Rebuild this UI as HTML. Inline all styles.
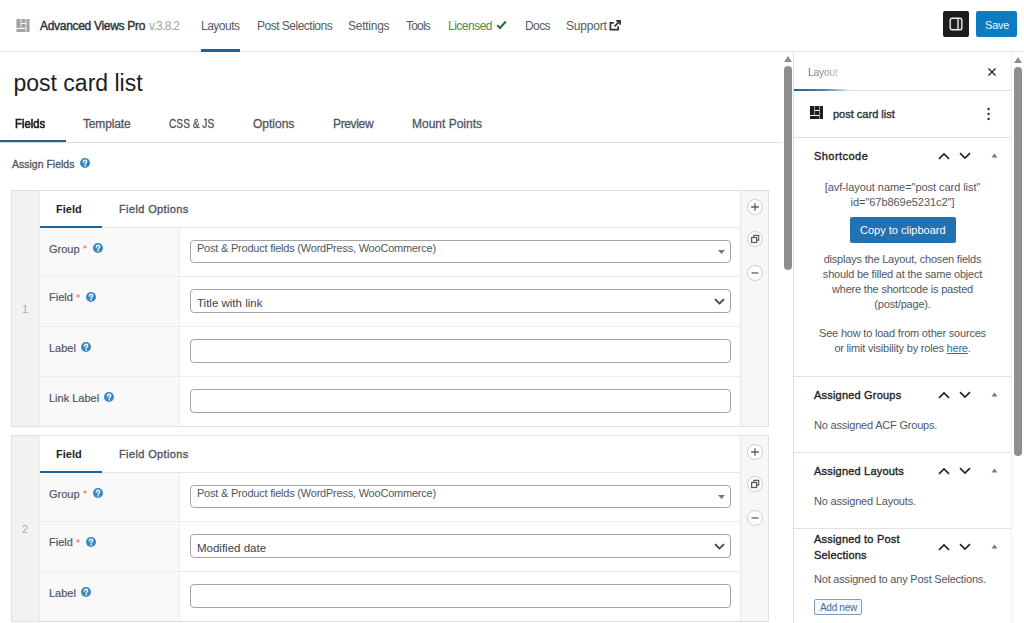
<!DOCTYPE html>
<html><head><meta charset="utf-8">
<style>
*{box-sizing:border-box;margin:0;padding:0}
html,body{width:1024px;height:623px;overflow:hidden;background:#fff;font-family:"Liberation Sans",sans-serif;color:#1e1e1e}
.a{position:absolute;white-space:nowrap}
.t12{font-size:12px;line-height:12px}
.t11{font-size:11px;line-height:11px}
.nav{font-size:12px;line-height:12px;letter-spacing:-0.5px;color:#555b61;top:20px}
.tab{font-size:12px;line-height:12px;letter-spacing:-0.15px;color:#50575e;-webkit-text-stroke:0.3px #50575e;top:118px}
.help{position:absolute;width:10px;height:10px}
.sep{position:absolute;height:1px;background:#e0e0e0}
.lbl{position:absolute;left:49px;font-size:11px;line-height:11px;color:#50575e;-webkit-text-stroke:0.2px #50575e}
.req{position:absolute;width:4px;height:4px}
.inp{position:absolute;left:190px;width:541px;height:24px;border:1px solid #a2a4a7;border-radius:4px;background:#fff}
.circ{position:absolute;left:747px;width:16px;height:16px}
.ph{position:absolute;left:814px;font-size:11px;line-height:11px;letter-spacing:0.2px;color:#1e1e1e;-webkit-text-stroke:0.35px #1e1e1e}
.pt{position:absolute;font-size:11px;line-height:15px;letter-spacing:-0.2px;color:#50575e}
.ctr{left:793px;width:219px;text-align:center}
</style></head><body>

<!-- ================= HEADER ================= -->
<div class="a" style="left:0;top:51px;width:1024px;height:1px;background:#e2e2e2"></div>
<svg class="a" style="left:16px;top:19px" width="14" height="13" viewBox="0 0 13.2 13"><g fill="#a5a5a5"><rect x="0" y="0" width="4" height="9"/><rect x="5" y="0" width="4" height="4"/><rect x="5" y="5" width="4" height="4"/><rect x="10" y="0" width="3.2" height="13"/><rect x="0" y="10" width="9" height="3"/><rect x="4" y="0" width="1" height="9" opacity="0.45"/><rect x="9" y="0" width="1" height="13" opacity="0.45"/></g></svg>
<div class="a t12" style="left:40px;top:20px;letter-spacing:-0.3px;color:#2c3338;-webkit-text-stroke:0.4px #2c3338">Advanced Views Pro</div>
<div class="a t12" style="left:149px;top:20px;letter-spacing:-0.7px;color:#a0a5aa">v.3.8.2</div>
<div class="a nav" style="left:201px">Layouts</div>
<div class="a" style="left:201px;top:49px;width:39px;height:3px;background:#1d6396"></div>
<div class="a nav" style="left:257px">Post Selections</div>
<div class="a nav" style="left:348px;letter-spacing:-0.25px">Settings</div>
<div class="a nav" style="left:406px;letter-spacing:-0.8px">Tools</div>
<div class="a nav" style="left:448px;color:#4a8753">Licensed</div>
<svg class="a" style="left:496px;top:20px" width="11" height="10" viewBox="0 0 11 10"><path d="M1.2 5.2L4 8L9.8 1.5" fill="none" stroke="#1d6e35" stroke-width="2"/></svg>
<div class="a nav" style="left:525px;letter-spacing:-0.6px">Docs</div>
<div class="a nav" style="left:566px;letter-spacing:-0.2px">Support</div>
<svg class="a" style="left:609px;top:19px" width="13" height="12" viewBox="0 0 13 12"><path d="M4.8 3.9H1.4V10.6H9.2V7.2" fill="none" stroke="#333" stroke-width="1.7"/><path d="M7.2 1.9H11.1V5.8M11.1 1.9L5.6 7.4" fill="none" stroke="#333" stroke-width="1.7"/></svg>
<div class="a" style="left:943px;top:11px;width:26px;height:26px;background:#1e1e1e;border-radius:2px"></div>
<svg class="a" style="left:949px;top:17px" width="14" height="14" viewBox="0 0 14 14"><rect x="1.2" y="1.2" width="11.6" height="11.6" rx="1.8" fill="none" stroke="#f0f0f0" stroke-width="1.4"/><rect x="8.3" y="1.2" width="1.4" height="11.6" fill="#f0f0f0"/></svg>
<div class="a" style="left:976px;top:11px;width:41px;height:26px;background:#0b7cc1;border-radius:2px"></div>
<div class="a t11" style="left:985px;top:20px;letter-spacing:-0.2px;color:#f2f8fc">Save</div>

<!-- ================= MAIN ================= -->
<svg class="a" style="left:784px;top:56px" width="8" height="6" viewBox="0 0 8 6"><path d="M0 6L4 0L8 6Z" fill="#8f8f8f"/></svg>
<div class="a" style="left:784px;top:66px;width:8px;height:204px;background:#8f8f8f;border-radius:4px"></div>

<div class="a" style="left:13.5px;top:72px;font-size:23px;line-height:23px;color:#1e1e1e">post card list</div>

<div class="a" style="left:0;top:142px;width:782px;height:1px;background:#dcdcde"></div>
<div class="a" style="left:0;top:140px;width:66px;height:2px;background:#1f6596"></div>
<div class="a tab" style="left:15px;color:#1e1e1e;-webkit-text-stroke:0.65px #1e1e1e;letter-spacing:0px;transform:scaleX(0.94);transform-origin:0 0">Fields</div>
<div class="a tab" style="left:83px">Template</div>
<div class="a tab" style="left:169px;letter-spacing:-0.1px;transform:scaleX(0.86);transform-origin:0 0">CSS &amp; JS</div>
<div class="a tab" style="left:253px;letter-spacing:0px">Options</div>
<div class="a tab" style="left:333px;letter-spacing:-0.35px">Preview</div>
<div class="a tab" style="left:412px;letter-spacing:0px">Mount Points</div>

<div class="a" style="left:12px;top:159px;font-size:10.5px;line-height:10.5px;letter-spacing:0px;color:#50575e;-webkit-text-stroke:0.3px #50575e">Assign Fields</div>
<svg class="help" style="left:80px;top:158px" viewBox="0 0 10 10"><g><circle cx="5" cy="5" r="5" fill="#3a88c0"/><path d="M3.4 3.9C3.4 2.9 4.1 2.3 5.05 2.3C6 2.3 6.7 2.9 6.7 3.8C6.7 4.7 5.5 4.9 5.2 5.7V6.1" fill="none" stroke="#f4f9fc" stroke-width="1.45" stroke-linecap="round"/><circle cx="5.2" cy="7.8" r="0.85" fill="#f4f9fc"/></g></svg>

<!-- BOX 1 -->
<div class="a" style="left:11px;top:190px;width:758px;height:237px;border:1px solid #e0e0e0;background:#f2f2f2"></div>
<div class="a" style="left:39px;top:191px;width:702px;height:235px;background:#fff;border-left:1px solid #e8e8e8;border-right:1px solid #e8e8e8"></div>
<div class="a" style="left:741px;top:191px;width:27px;height:235px;background:#f7f7f7"></div>
<div class="a" style="left:40px;top:228px;width:140px;height:198px;background:#f9f9f9;border-right:1px solid #ececec"></div>
<div class="sep" style="left:40px;top:227px;width:700px;background:#e5e5e5"></div>
<div class="sep" style="left:40px;top:276px;width:700px;background:#ececec"></div>
<div class="sep" style="left:40px;top:326px;width:700px;background:#ececec"></div>
<div class="sep" style="left:40px;top:376px;width:700px;background:#ececec"></div>
<div class="a" style="left:40px;top:226px;width:62px;height:2px;background:#1f6596"></div>
<div class="a t11" style="left:56px;top:204px;font-weight:bold;color:#1e1e1e">Field</div>
<div class="a t11" style="left:119px;top:204px;letter-spacing:0.38px;color:#50575e;-webkit-text-stroke:0.35px #50575e">Field Options</div>
<div class="a t11" style="left:22px;top:304px;color:#a7aaad">1</div>

<div class="lbl" style="top:244px">Group</div><svg class="req" style="left:83px;top:245px" viewBox="0 0 4 4"><g><path d="M2 0.3V3.7M0.4 1.2L3.6 2.8M3.6 1.2L0.4 2.8" stroke="#e2888a" stroke-width="1"/></g></svg><svg class="help" style="left:93px;top:243px" viewBox="0 0 10 10"><g><circle cx="5" cy="5" r="5" fill="#3a88c0"/><path d="M3.4 3.9C3.4 2.9 4.1 2.3 5.05 2.3C6 2.3 6.7 2.9 6.7 3.8C6.7 4.7 5.5 4.9 5.2 5.7V6.1" fill="none" stroke="#f4f9fc" stroke-width="1.45" stroke-linecap="round"/><circle cx="5.2" cy="7.8" r="0.85" fill="#f4f9fc"/></g></svg>
<div class="inp" style="top:240px;height:23px"></div>
<div class="a t11" style="left:197px;top:243px;letter-spacing:-0.22px;color:#50575e">Post &amp; Product fields (WordPress, WooCommerce)</div>
<svg class="a" style="left:718px;top:250px" width="7" height="4" viewBox="0 0 7 4"><path d="M0 0H7L3.5 4Z" fill="#777"/></svg>

<div class="lbl" style="top:292px">Field</div><svg class="req" style="left:76px;top:294px" viewBox="0 0 4 4"><g><path d="M2 0.3V3.7M0.4 1.2L3.6 2.8M3.6 1.2L0.4 2.8" stroke="#e2888a" stroke-width="1"/></g></svg><svg class="help" style="left:86px;top:292px" viewBox="0 0 10 10"><g><circle cx="5" cy="5" r="5" fill="#3a88c0"/><path d="M3.4 3.9C3.4 2.9 4.1 2.3 5.05 2.3C6 2.3 6.7 2.9 6.7 3.8C6.7 4.7 5.5 4.9 5.2 5.7V6.1" fill="none" stroke="#f4f9fc" stroke-width="1.45" stroke-linecap="round"/><circle cx="5.2" cy="7.8" r="0.85" fill="#f4f9fc"/></g></svg>
<div class="inp" style="top:289px"></div>
<div class="a" style="left:197px;top:298px;font-size:11.5px;line-height:11.5px;color:#3c434a">Title with link</div>
<svg class="a" style="left:714px;top:298px" width="11" height="7" viewBox="0 0 11 7"><path d="M1 1.2L5.5 5.6L10 1.2" fill="none" stroke="#3c434a" stroke-width="1.8"/></svg>

<div class="lbl" style="top:343px">Label</div><svg class="help" style="left:81px;top:342px" viewBox="0 0 10 10"><g><circle cx="5" cy="5" r="5" fill="#3a88c0"/><path d="M3.4 3.9C3.4 2.9 4.1 2.3 5.05 2.3C6 2.3 6.7 2.9 6.7 3.8C6.7 4.7 5.5 4.9 5.2 5.7V6.1" fill="none" stroke="#f4f9fc" stroke-width="1.45" stroke-linecap="round"/><circle cx="5.2" cy="7.8" r="0.85" fill="#f4f9fc"/></g></svg>
<div class="inp" style="top:339px"></div>
<div class="lbl" style="top:393px">Link Label</div><svg class="help" style="left:104px;top:392px" viewBox="0 0 10 10"><g><circle cx="5" cy="5" r="5" fill="#3a88c0"/><path d="M3.4 3.9C3.4 2.9 4.1 2.3 5.05 2.3C6 2.3 6.7 2.9 6.7 3.8C6.7 4.7 5.5 4.9 5.2 5.7V6.1" fill="none" stroke="#f4f9fc" stroke-width="1.45" stroke-linecap="round"/><circle cx="5.2" cy="7.8" r="0.85" fill="#f4f9fc"/></g></svg>
<div class="inp" style="top:389px"></div>

<svg class="circ" style="top:199px" viewBox="0 0 16 16"><circle cx="8" cy="8" r="7.5" fill="#fff" stroke="#cfcfcf"/><path d="M4.2 8H11.8M8 4.2V11.8" stroke="#555d66" stroke-width="1.3"/></svg>
<svg class="circ" style="top:231px" viewBox="0 0 16 16"><circle cx="8" cy="8" r="7.5" fill="#fff" stroke="#cfcfcf"/><path d="M6.8 6.2V4.3H11.7V9.2H9.8" fill="none" stroke="#555d66" stroke-width="1.2"/><rect x="4.6" y="6.5" width="5" height="5" fill="none" stroke="#555d66" stroke-width="1.3"/></svg>
<svg class="circ" style="top:265px" viewBox="0 0 16 16"><circle cx="8" cy="8" r="7.5" fill="#fff" stroke="#cfcfcf"/><path d="M4.5 8H11.5" stroke="#555d66" stroke-width="1.3"/></svg>

<!-- BOX 2 (offset +246) -->
<div class="a" style="left:11px;top:435px;width:758px;height:187px;border:1px solid #e0e0e0;background:#f2f2f2"></div>
<div class="a" style="left:39px;top:436px;width:702px;height:185px;background:#fff;border-left:1px solid #e8e8e8;border-right:1px solid #e8e8e8"></div>
<div class="a" style="left:741px;top:436px;width:27px;height:185px;background:#f7f7f7"></div>
<div class="a" style="left:40px;top:473px;width:140px;height:148px;background:#f9f9f9;border-right:1px solid #ececec"></div>
<div class="sep" style="left:40px;top:472px;width:700px;background:#e5e5e5"></div>
<div class="sep" style="left:40px;top:521px;width:700px;background:#ececec"></div>
<div class="sep" style="left:40px;top:571px;width:700px;background:#ececec"></div>
<div class="a" style="left:40px;top:471px;width:62px;height:2px;background:#1f6596"></div>
<div class="a t11" style="left:56px;top:449px;font-weight:bold;color:#1e1e1e">Field</div>
<div class="a t11" style="left:119px;top:449px;letter-spacing:0.38px;color:#50575e;-webkit-text-stroke:0.35px #50575e">Field Options</div>
<div class="a t11" style="left:22px;top:524px;color:#a7aaad">2</div>

<div class="lbl" style="top:489px">Group</div><svg class="req" style="left:83px;top:490px" viewBox="0 0 4 4"><g><path d="M2 0.3V3.7M0.4 1.2L3.6 2.8M3.6 1.2L0.4 2.8" stroke="#e2888a" stroke-width="1"/></g></svg><svg class="help" style="left:93px;top:488px" viewBox="0 0 10 10"><g><circle cx="5" cy="5" r="5" fill="#3a88c0"/><path d="M3.4 3.9C3.4 2.9 4.1 2.3 5.05 2.3C6 2.3 6.7 2.9 6.7 3.8C6.7 4.7 5.5 4.9 5.2 5.7V6.1" fill="none" stroke="#f4f9fc" stroke-width="1.45" stroke-linecap="round"/><circle cx="5.2" cy="7.8" r="0.85" fill="#f4f9fc"/></g></svg>
<div class="inp" style="top:485px;height:23px"></div>
<div class="a t11" style="left:197px;top:488px;letter-spacing:-0.22px;color:#50575e">Post &amp; Product fields (WordPress, WooCommerce)</div>
<svg class="a" style="left:718px;top:495px" width="7" height="4" viewBox="0 0 7 4"><path d="M0 0H7L3.5 4Z" fill="#777"/></svg>

<div class="lbl" style="top:537px">Field</div><svg class="req" style="left:76px;top:539px" viewBox="0 0 4 4"><g><path d="M2 0.3V3.7M0.4 1.2L3.6 2.8M3.6 1.2L0.4 2.8" stroke="#e2888a" stroke-width="1"/></g></svg><svg class="help" style="left:86px;top:537px" viewBox="0 0 10 10"><g><circle cx="5" cy="5" r="5" fill="#3a88c0"/><path d="M3.4 3.9C3.4 2.9 4.1 2.3 5.05 2.3C6 2.3 6.7 2.9 6.7 3.8C6.7 4.7 5.5 4.9 5.2 5.7V6.1" fill="none" stroke="#f4f9fc" stroke-width="1.45" stroke-linecap="round"/><circle cx="5.2" cy="7.8" r="0.85" fill="#f4f9fc"/></g></svg>
<div class="inp" style="top:534px"></div>
<div class="a" style="left:197px;top:543px;font-size:11.5px;line-height:11.5px;color:#3c434a">Modified date</div>
<svg class="a" style="left:714px;top:543px" width="11" height="7" viewBox="0 0 11 7"><path d="M1 1.2L5.5 5.6L10 1.2" fill="none" stroke="#3c434a" stroke-width="1.8"/></svg>

<div class="lbl" style="top:588px">Label</div><svg class="help" style="left:81px;top:587px" viewBox="0 0 10 10"><g><circle cx="5" cy="5" r="5" fill="#3a88c0"/><path d="M3.4 3.9C3.4 2.9 4.1 2.3 5.05 2.3C6 2.3 6.7 2.9 6.7 3.8C6.7 4.7 5.5 4.9 5.2 5.7V6.1" fill="none" stroke="#f4f9fc" stroke-width="1.45" stroke-linecap="round"/><circle cx="5.2" cy="7.8" r="0.85" fill="#f4f9fc"/></g></svg>
<div class="inp" style="top:584px"></div>

<svg class="circ" style="top:444px" viewBox="0 0 16 16"><circle cx="8" cy="8" r="7.5" fill="#fff" stroke="#cfcfcf"/><path d="M4.2 8H11.8M8 4.2V11.8" stroke="#555d66" stroke-width="1.3"/></svg>
<svg class="circ" style="top:476px" viewBox="0 0 16 16"><circle cx="8" cy="8" r="7.5" fill="#fff" stroke="#cfcfcf"/><path d="M6.8 6.2V4.3H11.7V9.2H9.8" fill="none" stroke="#555d66" stroke-width="1.2"/><rect x="4.6" y="6.5" width="5" height="5" fill="none" stroke="#555d66" stroke-width="1.3"/></svg>
<svg class="circ" style="top:510px" viewBox="0 0 16 16"><circle cx="8" cy="8" r="7.5" fill="#fff" stroke="#cfcfcf"/><path d="M4.5 8H11.5" stroke="#555d66" stroke-width="1.3"/></svg>

<!-- ================= SIDEBAR ================= -->
<div class="a" style="left:793px;top:52px;width:1px;height:571px;background:#e0e0e0"></div>
<div class="a" style="left:1011px;top:52px;width:1px;height:571px;background:#f0f0f0"></div>
<div class="a" style="left:808px;top:67px;font-size:10.5px;line-height:10.5px;letter-spacing:-0.3px;background:linear-gradient(90deg,#707070,#8a8a8a 60%,#d0d0d0);-webkit-background-clip:text;background-clip:text;color:transparent">Layout</div>
<svg class="a" style="left:987px;top:67px" width="10" height="10" viewBox="0 0 10 10"><path d="M1.5 1.5L8.5 8.5M8.5 1.5L1.5 8.5" stroke="#2a2a2a" stroke-width="1.35"/></svg>
<div class="sep" style="left:794px;top:90px;width:217px"></div>
<div class="a" style="left:794px;top:89px;width:56px;height:2px;background:linear-gradient(90deg,#235d84,#4a8ab5 55%,rgba(255,255,255,0))"></div>

<svg class="a" style="left:810px;top:106px" width="13.2" height="13" viewBox="0 0 13.2 13"><g fill="#1e1e1e"><rect x="0" y="0" width="4" height="9"/><rect x="5" y="0" width="4" height="4"/><rect x="5" y="5" width="4" height="4"/><rect x="10" y="0" width="3.2" height="13"/><rect x="0" y="10" width="9" height="3"/><rect x="4" y="0" width="1" height="9" opacity="0.45"/><rect x="9" y="0" width="1" height="13" opacity="0.45"/></g></svg>
<div class="a t11" style="left:833px;top:109px;letter-spacing:0px;color:#2c3338;-webkit-text-stroke:0.35px #2c3338">post card list</div>
<svg class="a" style="left:987px;top:107px" width="3" height="14" viewBox="0 0 3 14"><circle cx="1.6" cy="2" r="1.15" fill="#1e1e1e"/><circle cx="1.6" cy="7" r="1.15" fill="#1e1e1e"/><circle cx="1.6" cy="12" r="1.15" fill="#1e1e1e"/></svg>
<div class="sep" style="left:794px;top:137px;width:217px"></div>

<div class="ph" style="top:151px;letter-spacing:0.45px">Shortcode</div>
<svg class="a" style="left:938px;top:152px" width="12" height="8" viewBox="0 0 12 7"><g><path d="M1 6.3L6 1.5L11 6.3" fill="none" stroke="#262626" stroke-width="1.7"/></g></svg>
<svg class="a" style="left:959px;top:152px" width="12" height="8" viewBox="0 0 12 7"><g transform="translate(0,7) scale(1,-1)"><g><path d="M1 6.3L6 1.5L11 6.3" fill="none" stroke="#262626" stroke-width="1.7"/></g></g></svg>
<svg class="a" style="left:991px;top:153px" width="7" height="5" viewBox="0 0 7 5"><path d="M0.5 4.6L3.5 0.4L6.5 4.6Z" fill="#7a7a7a"/></svg>

<div class="pt ctr" style="top:180px;letter-spacing:-0.05px">[avf-layout name="post card list"<br>id="67b869e5231c2"]</div>
<div class="a" style="left:850px;top:217px;width:106px;height:26px;background:#2271b1;border-radius:2px"></div>
<div class="a t11" style="left:860px;top:225px;color:#fff">Copy to clipboard</div>
<div class="pt ctr" style="top:252px">displays the Layout, chosen fields<br>should be filled at the same object<br>where the shortcode is pasted<br>(post/page).</div>
<div class="pt ctr" style="top:326px">See how to load from other sources<br>or limit visibility by roles <span style="color:#2271b1;text-decoration:underline">here</span>.</div>
<div class="sep" style="left:794px;top:376px;width:217px"></div>

<div class="ph" style="top:390px">Assigned Groups</div>
<svg class="a" style="left:938px;top:391px" width="12" height="8" viewBox="0 0 12 7"><g><path d="M1 6.3L6 1.5L11 6.3" fill="none" stroke="#262626" stroke-width="1.7"/></g></svg>
<svg class="a" style="left:959px;top:391px" width="12" height="8" viewBox="0 0 12 7"><g transform="translate(0,7) scale(1,-1)"><g><path d="M1 6.3L6 1.5L11 6.3" fill="none" stroke="#262626" stroke-width="1.7"/></g></g></svg>
<svg class="a" style="left:991px;top:392px" width="7" height="5" viewBox="0 0 7 5"><path d="M0.5 4.6L3.5 0.4L6.5 4.6Z" fill="#7a7a7a"/></svg>
<div class="pt" style="left:814px;top:418px">No assigned ACF Groups.</div>
<div class="sep" style="left:794px;top:452px;width:217px"></div>

<div class="ph" style="top:466px">Assigned Layouts</div>
<svg class="a" style="left:938px;top:467px" width="12" height="8" viewBox="0 0 12 7"><g><path d="M1 6.3L6 1.5L11 6.3" fill="none" stroke="#262626" stroke-width="1.7"/></g></svg>
<svg class="a" style="left:959px;top:467px" width="12" height="8" viewBox="0 0 12 7"><g transform="translate(0,7) scale(1,-1)"><g><path d="M1 6.3L6 1.5L11 6.3" fill="none" stroke="#262626" stroke-width="1.7"/></g></g></svg>
<svg class="a" style="left:991px;top:468px" width="7" height="5" viewBox="0 0 7 5"><path d="M0.5 4.6L3.5 0.4L6.5 4.6Z" fill="#7a7a7a"/></svg>
<div class="pt" style="left:814px;top:494px">No assigned Layouts.</div>
<div class="sep" style="left:794px;top:528px;width:217px"></div>

<div class="ph" style="top:531px;line-height:16px">Assigned to Post<br>Selections</div>
<svg class="a" style="left:938px;top:543px" width="12" height="8" viewBox="0 0 12 7"><g><path d="M1 6.3L6 1.5L11 6.3" fill="none" stroke="#262626" stroke-width="1.7"/></g></svg>
<svg class="a" style="left:959px;top:543px" width="12" height="8" viewBox="0 0 12 7"><g transform="translate(0,7) scale(1,-1)"><g><path d="M1 6.3L6 1.5L11 6.3" fill="none" stroke="#262626" stroke-width="1.7"/></g></g></svg>
<svg class="a" style="left:991px;top:544px" width="7" height="5" viewBox="0 0 7 5"><path d="M0.5 4.6L3.5 0.4L6.5 4.6Z" fill="#7a7a7a"/></svg>
<div class="pt" style="left:814px;top:572px">Not assigned to any Post Selections.</div>
<div class="a" style="left:814px;top:599px;width:48px;height:16px;border:1px solid #7d9fbd;border-radius:2px;background:#f5f8fa"></div>
<div class="a" style="left:820px;top:603px;font-size:10px;line-height:10px;letter-spacing:-0.3px;color:#3f6f98">Add new</div>

<svg class="a" style="left:1014px;top:57px" width="8" height="6" viewBox="0 0 8 6"><path d="M0 6L4 0L8 6Z" fill="#8f8f8f"/></svg>
<div class="a" style="left:1014px;top:67px;width:8px;height:389px;background:#8f8f8f;border-radius:4px"></div>
</body></html>
